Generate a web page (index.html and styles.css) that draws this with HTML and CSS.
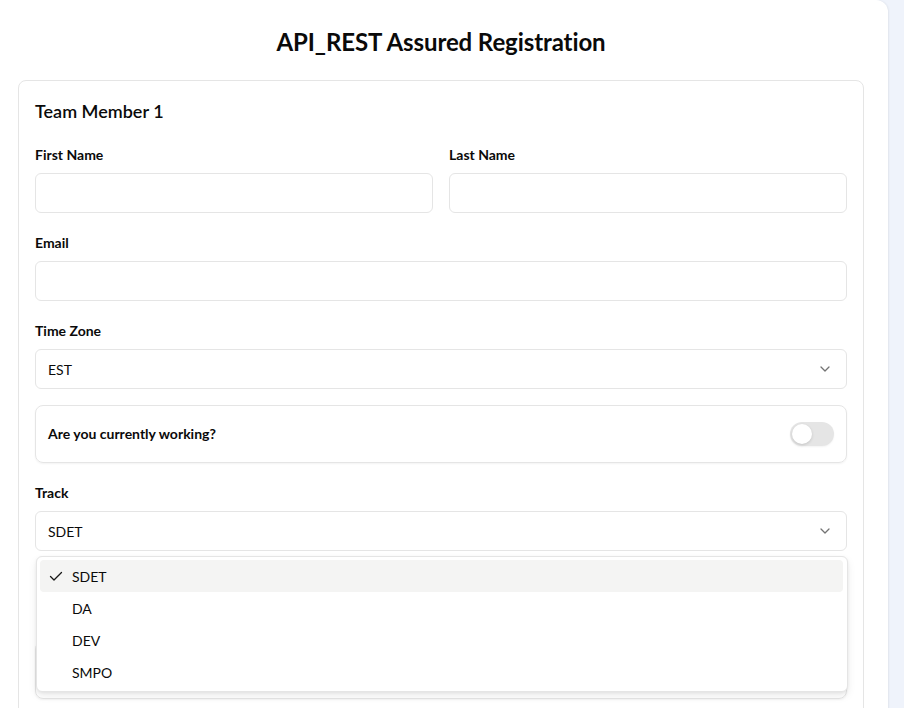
FILE: index.html
```html
<!DOCTYPE html>
<html lang="en">
<head>
<meta charset="utf-8">
<title>API_REST Assured Registration</title>
<link rel="stylesheet" href="styles.css">
</head>
<body>
<main class="panel">
  <h1 class="title">API_REST Assured Registration</h1>
  <section class="card">
    <h2 class="card-title">Team Member 1</h2>
    <div class="row">
      <div class="field">
        <label class="label">First Name</label>
        <input class="input" type="text">
      </div>
      <div class="field">
        <label class="label">Last Name</label>
        <input class="input" type="text">
      </div>
    </div>
    <div class="field">
      <label class="label">Email</label>
      <input class="input" type="email">
    </div>
    <div class="field field-before-toggle">
      <label class="label">Time Zone</label>
      <div class="select">
        <span>EST</span>
        <svg class="chev" viewBox="0 0 16 16" width="16" height="16"><path d="M4 6l4 4 4-4" fill="none" stroke="#737373" stroke-width="1.3" stroke-linecap="round" stroke-linejoin="round"/></svg>
      </div>
    </div>
    <div class="toggle-card">
      <span class="toggle-text">Are you currently working?</span>
      <span class="switch"><span class="knob"></span></span>
    </div>
    <div class="field field-track">
      <label class="label">Track</label>
      <div class="select-wrap">
        <div class="select">
          <span>SDET</span>
          <svg class="chev" viewBox="0 0 16 16" width="16" height="16"><path d="M4 6l4 4 4-4" fill="none" stroke="#737373" stroke-width="1.3" stroke-linecap="round" stroke-linejoin="round"/></svg>
        </div>
        <ul class="menu">
          <li class="item active">
            <svg class="check" viewBox="0 0 16 16" width="16" height="16"><path d="M2.5 8.5l3.5 3.5 7.5-7.5" fill="none" stroke="#171717" stroke-width="1.3" stroke-linecap="round" stroke-linejoin="round"/></svg>
            <span>SDET</span>
          </li>
          <li class="item"><span class="check-space"></span><span>DA</span></li>
          <li class="item"><span class="check-space"></span><span>DEV</span></li>
          <li class="item"><span class="check-space"></span><span>SMPO</span></li>
        </ul>
      </div>
    </div>
    <div class="toggle-card toggle-card-later" aria-label="Second option">
      <span class="switch"><span class="knob"></span></span>
    </div>
  </section>
</main>
</body>
</html>
```

FILE: styles.css
```css
* { box-sizing: border-box; }
html, body { margin: 0; padding: 0; }
body {
  background: #eff3fb;
  font-family: "Lato", "Segoe UI", "Noto Sans", sans-serif;
  color: #0a0a0a;
  height: 708px;
  overflow: hidden;
}
.panel {
  width: 888px;
  background: #ffffff;
  border-top-right-radius: 12px;
  box-shadow: 1px 0 2px rgba(0,0,0,0.06);
  padding: 26px 24px 40px 18px;
  min-height: 708px;
}
.title {
  margin: 0 0 22px;
  text-align: center;
  font-size: 24px;
  line-height: 32px;
  font-weight: 700;
  letter-spacing: -0.1px;
}
.card {
  border: 1px solid #e5e5e5;
  border-radius: 8px;
  padding: 16px 16px 16px;
}
.card-title {
  margin: 0 0 20px;
  font-size: 18px;
  line-height: 28px;
  font-weight: 600;
}
.row {
  display: grid;
  grid-template-columns: 1fr 1fr;
  gap: 16px;
  margin-bottom: 20px;
}
.field { margin-bottom: 20px; }
.row .field { margin-bottom: 0; }
.label {
  display: block;
  font-size: 14px;
  line-height: 20px;
  font-weight: 700;
  margin-bottom: 8px;
}
.input, .select {
  display: block;
  width: 100%;
  height: 40px;
  border: 1px solid #e5e5e5;
  border-radius: 6px;
  background: #fff;
  font: inherit;
  font-size: 14px;
  padding: 0 12px;
}
.select {
  display: flex;
  align-items: center;
  justify-content: space-between;
  padding: 0 13px 0 12px;
}
.chev { display: block; }
.field-before-toggle { margin-bottom: 16px; }
.toggle-card {
  display: flex;
  align-items: center;
  justify-content: space-between;
  height: 58px;
  border: 1px solid #e5e5e5;
  border-radius: 8px;
  box-shadow: 0 1px 2px rgba(0,0,0,0.05);
  padding: 0 12px;
  margin-bottom: 20px;
}
.toggle-card-later {
  justify-content: flex-end;
  margin-top: 90px;
}
.toggle-text {
  font-size: 14px;
  font-weight: 700;
  line-height: 20px;
}
.switch {
  width: 44px;
  height: 24px;
  border-radius: 12px;
  background: #e5e5e5;
  padding: 2px;
  display: flex;
  align-items: center;
  box-shadow: 0 1px 2px rgba(0,0,0,0.05);
}
.knob {
  width: 20px;
  height: 20px;
  border-radius: 50%;
  background: #fff;
  box-shadow: 0 1px 3px rgba(0,0,0,0.15);
}
.select-wrap { position: relative; }
.menu {
  position: absolute;
  top: 45px;
  left: 1px;
  right: -1px;
  margin: 0;
  padding: 3px 4px 3px 3px;
  list-style: none;
  background: #fff;
  border: 1px solid #e5e5e5;
  border-radius: 6px;
  box-shadow: 0 4px 8px rgba(0,0,0,0.08), 0 1px 3px rgba(0,0,0,0.06);
  z-index: 5;
}
.item {
  display: flex;
  align-items: center;
  gap: 8px;
  height: 32px;
  padding: 0 8px;
  border-radius: 4px;
  font-size: 14px;
  color: #0a0a0a;
}
.item.active { background: #f4f4f3; }
.check, .check-space { width: 16px; height: 16px; display: block; flex: none; }
```
